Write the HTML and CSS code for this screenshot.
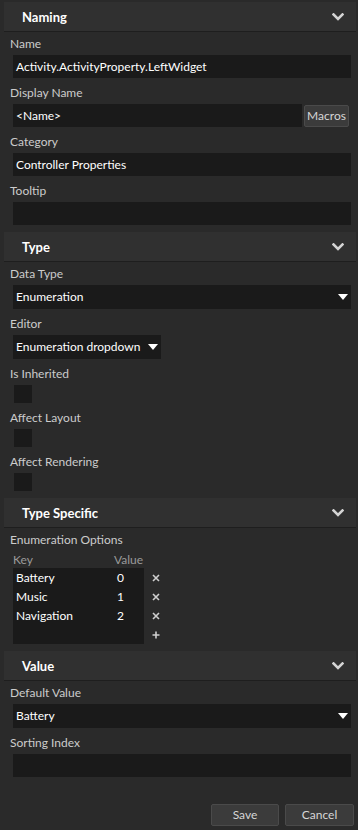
FILE: index.html
```html
<!DOCTYPE html>
<html>
<head>
<meta charset="utf-8">
<link rel="stylesheet" href="styles.css">
</head>
<body>
<div class="panel">
  <section class="group">
    <div class="group-head"><span>Naming</span><svg class="chev" width="12" height="8" viewBox="0 0 12 8"><polyline points="1.5,1.5 6,6 10.5,1.5"/></svg></div>
    <div class="group-body">
      <div class="field"><div class="lbl">Name</div><div class="input">Activity.ActivityProperty.LeftWidget</div></div>
      <div class="field"><div class="lbl">Display Name</div>
        <div class="row"><div class="input grow">&lt;Name&gt;</div><div class="btn macros">Macros</div></div>
      </div>
      <div class="field"><div class="lbl">Category</div><div class="input">Controller Properties</div></div>
      <div class="field"><div class="lbl">Tooltip</div><div class="input"></div></div>
    </div>
  </section>

  <section class="group">
    <div class="group-head"><span>Type</span><svg class="chev" width="12" height="8" viewBox="0 0 12 8"><polyline points="1.5,1.5 6,6 10.5,1.5"/></svg></div>
    <div class="group-body">
      <div class="field"><div class="lbl">Data Type</div><div class="input dropdown"><span>Enumeration</span><svg class="tri" width="10" height="6" viewBox="0 0 10 6"><polygon points="0,0 10,0 5,6"/></svg></div></div>
      <div class="field"><div class="lbl">Editor</div><div class="input dropdown editor"><span>Enumeration dropdown</span><svg class="tri" width="10" height="6" viewBox="0 0 10 6"><polygon points="0,0 10,0 5,6"/></svg></div></div>
      <div class="field"><div class="lbl">Is Inherited</div><div class="check"></div></div>
      <div class="field"><div class="lbl">Affect Layout</div><div class="check"></div></div>
      <div class="field"><div class="lbl">Affect Rendering</div><div class="check"></div></div>
    </div>
  </section>

  <section class="group">
    <div class="group-head"><span>Type Specific</span><svg class="chev" width="12" height="8" viewBox="0 0 12 8"><polyline points="1.5,1.5 6,6 10.5,1.5"/></svg></div>
    <div class="group-body spec">
      <div class="lbl">Enumeration Options</div>
      <div class="enum-head"><span class="k">Key</span><span class="v">Value</span></div>
      <div class="enum">
        <div class="enum-table">
          <div class="erow"><span class="k">Battery</span><span class="v">0</span></div>
          <div class="erow"><span class="k">Music</span><span class="v">1</span></div>
          <div class="erow"><span class="k">Navigation</span><span class="v">2</span></div>
          <div class="erow"></div>
        </div>
        <div class="enum-icons">
          <div class="ico"><svg width="8" height="8" viewBox="0 0 8 8"><path d="M1 1L7 7M7 1L1 7"/></svg></div>
          <div class="ico"><svg width="8" height="8" viewBox="0 0 8 8"><path d="M1 1L7 7M7 1L1 7"/></svg></div>
          <div class="ico"><svg width="8" height="8" viewBox="0 0 8 8"><path d="M1 1L7 7M7 1L1 7"/></svg></div>
          <div class="ico"><svg width="8" height="8" viewBox="0 0 8 8"><path d="M4 0.5V7.5M0.5 4H7.5"/></svg></div>
        </div>
      </div>
    </div>
  </section>

  <section class="group">
    <div class="group-head"><span>Value</span><svg class="chev" width="12" height="8" viewBox="0 0 12 8"><polyline points="1.5,1.5 6,6 10.5,1.5"/></svg></div>
    <div class="group-body">
      <div class="field"><div class="lbl">Default Value</div><div class="input dropdown"><span>Battery</span><svg class="tri" width="10" height="6" viewBox="0 0 10 6"><polygon points="0,0 10,0 5,6"/></svg></div></div>
      <div class="field"><div class="lbl">Sorting Index</div><div class="input"></div></div>
    </div>
  </section>

  <div class="footer">
    <div class="btn save">Save</div>
    <div class="btn cancel">Cancel</div>
  </div>
</div>
</body>
</html>
```

FILE: styles.css
```css
* { box-sizing: border-box; }
html, body { margin: 0; padding: 0; }
body {
  background: #2a2a2a;
  font-family: Lato, "Noto Sans", "Liberation Sans", sans-serif;
  font-size: 12px;
  color: #ffffff;
  width: 358px;
  height: 830px;
  overflow: hidden;
}
.panel {
  height: 830px;
  padding-top: 2px;
  display: flex;
  flex-direction: column;
}
.group-head {
  margin: 0 2px 0 4px;
  height: 30px;
  background: #303030;
  border-bottom: 1px solid #1e1e1e;
  display: flex;
  align-items: center;
  justify-content: space-between;
  padding: 0 12px 0 18px;
  font-weight: bold;
  font-size: 13px;
  color: #ffffff;
}
.chev polyline {
  fill: none;
  stroke: #d4d4d4;
  stroke-width: 2.6;
  stroke-linecap: square;
}
.group-body {
  padding: 0 7px 4px 10px;
}
.group-body.spec { padding-bottom: 7px; }
.field { margin-bottom: 3px; }
.lbl {
  height: 23px;
  padding-top: 4px;
  line-height: 16px;
  color: #cccccc;
}
.input {
  margin-left: 3px;
  height: 23px;
  line-height: 23px;
  padding-left: 3px;
  background: #1a1a1a;
  color: #ffffff;
  white-space: nowrap;
  overflow: hidden;
}
.row {
  display: flex;
  align-items: center;
  gap: 2px;
}
.row .grow { flex: 1; }
.btn {
  background: #3b3b3b;
  border: 1px solid #4a4a4a;
  border-radius: 2px;
  color: #d6d6d6;
  text-align: center;
}
.macros {
  width: 45px;
  height: 22px;
  line-height: 20px;
  margin-right: 2px;
}
.dropdown {
  height: 24px;
  line-height: 24px;
  display: flex;
  align-items: center;
  justify-content: space-between;
  padding-right: 3px;
}
.dropdown.editor { width: 148px; }
.tri polygon { fill: #ffffff; }
.check {
  margin-left: 4px;
  width: 18px;
  height: 18px;
  background: #1a1a1a;
}
.enum-head {
  height: 17px;
  line-height: 17px;
  margin-left: 3px;
  display: flex;
  color: #9a9a9a;
}
.enum-head .k { width: 101px; }
.enum {
  display: flex;
  margin-left: 3px;
}
.enum-table {
  width: 131px;
  background: #1a1a1a;
}
.erow {
  height: 19px;
  line-height: 19px;
  display: flex;
}
.erow .k { width: 101px; padding-left: 3px; }
.erow .v { padding-left: 3px; }
.enum-icons { margin-left: 8px; }
.ico {
  height: 19px;
  display: flex;
  align-items: center;
}
.ico path {
  fill: none;
  stroke: #cfcfcf;
  stroke-width: 1.6;
}
.footer {
  margin-top: auto;
  display: flex;
  justify-content: flex-end;
  gap: 6px;
  padding: 0 4px 4px 0;
}
.footer .btn {
  height: 22px;
  line-height: 20px;
}
.save { width: 68px; }
.cancel { width: 69px; }
```
